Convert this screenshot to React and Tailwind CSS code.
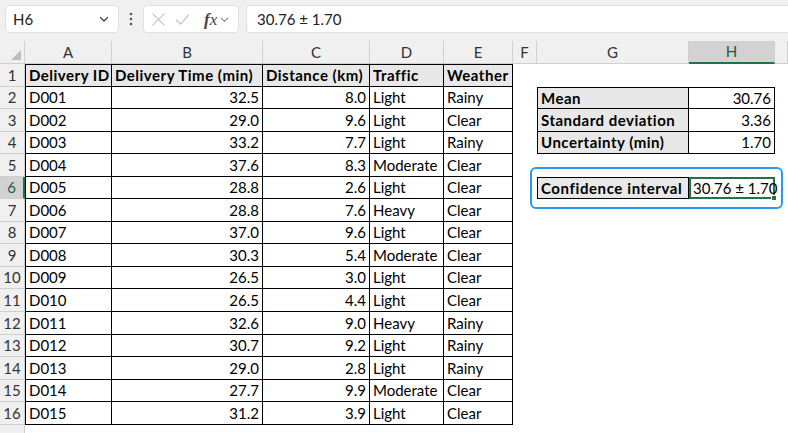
import React from "react";

const COLS = ["A", "B", "C", "D", "E", "F", "G", "H", ""];
const DATA = [
  ["D001", "32.5", "8.0", "Light", "Rainy"],
  ["D002", "29.0", "9.6", "Light", "Clear"],
  ["D003", "33.2", "7.7", "Light", "Rainy"],
  ["D004", "37.6", "8.3", "Moderate", "Clear"],
  ["D005", "28.8", "2.6", "Light", "Clear"],
  ["D006", "28.8", "7.6", "Heavy", "Clear"],
  ["D007", "37.0", "9.6", "Light", "Clear"],
  ["D008", "30.3", "5.4", "Moderate", "Clear"],
  ["D009", "26.5", "3.0", "Light", "Clear"],
  ["D010", "26.5", "4.4", "Light", "Clear"],
  ["D011", "32.6", "9.0", "Heavy", "Rainy"],
  ["D012", "30.7", "9.2", "Light", "Rainy"],
  ["D013", "29.0", "2.8", "Light", "Rainy"],
  ["D014", "27.7", "9.9", "Moderate", "Clear"],
  ["D015", "31.2", "3.9", "Light", "Clear"],
];
const HEAD = ["Delivery ID", "Delivery Time (min)", "Distance (km)", "Traffic", "Weather"];
const STATS = {
  2: ["Mean", "30.76"],
  3: ["Standard deviation", "3.36"],
  4: ["Uncertainty (min)", "1.70"],
};

function Chevron({ className }) {
  return (
    <svg className={className} viewBox="0 0 12 12" fill="none" stroke="currentColor" strokeWidth="1.3" strokeLinecap="round" strokeLinejoin="round">
      <path d="M2.5 4.5 L6 8 L9.5 4.5" />
    </svg>
  );
}

function Toolbar() {
  return (
    <div className="flex h-[41px] items-start bg-[#f0f0f0] pl-[5px] pt-[5px]">
      <div className="flex h-[28px] w-[114px] items-center justify-between rounded-[4px] border border-[#e0e0e0] bg-white pl-[7px] pr-[8px] text-[15px] text-[#222]">
        <span>H6</span>
        <Chevron className="h-[12px] w-[12px] text-[#444]" />
      </div>
      <div className="flex h-[28px] w-[24px] items-center justify-center">
        <svg viewBox="0 0 4 14" className="h-[14px] w-[4px]" fill="#555">
          <circle cx="2" cy="2" r="1.3" />
          <circle cx="2" cy="7" r="1.3" />
          <circle cx="2" cy="12" r="1.3" />
        </svg>
      </div>
      <div className="flex h-[28px] w-[96px] items-center rounded-[4px] border border-[#e0e0e0] bg-white pl-[7px]">
        <svg viewBox="0 0 16 16" className="h-[15px] w-[15px]" fill="none" stroke="#c4c4c4" strokeWidth="1.3" strokeLinecap="round">
          <path d="M2 2 L14 14 M14 2 L2 14" />
        </svg>
        <svg viewBox="0 0 16 16" className="ml-[9px] h-[15px] w-[15px]" fill="none" stroke="#c4c4c4" strokeWidth="1.3" strokeLinecap="round" strokeLinejoin="round">
          <path d="M1.5 8.5 L6 13 L14.5 3" />
        </svg>
        <span className="ml-[14px] font-['Liberation_Serif',serif] text-[17px] italic leading-none text-[#444]">
          <span className="font-bold">f</span>x
        </span>
        <Chevron className="ml-[2px] h-[11px] w-[11px] text-[#888]" />
      </div>
      <div className="ml-[7px] flex h-[28px] flex-1 items-center rounded-l-[4px] border border-r-0 border-[#e0e0e0] bg-white pl-[10px] text-[15px] text-[#222]">
        30.76 ± 1.70
      </div>
    </div>
  );
}

function Sheet() {
  const cells = [];
  cells.push(
    <div key="corner" className="relative border-b border-r border-[#cfcfcf] bg-[#f0f0f0]">
      <svg viewBox="0 0 10 10" className="absolute bottom-[3px] right-[3px] h-[10px] w-[10px]">
        <path d="M10 0 L10 10 L0 10 Z" fill="#bdbdbd" />
      </svg>
    </div>
  );
  COLS.forEach((c, i) => {
    const sel = c === "H";
    cells.push(
      <div
        key={"ch" + i}
        className={
          sel
            ? "flex items-center justify-center border-b-2 border-r border-b-[#217346] border-r-[#cfcfcf] bg-[#d2d2d2] text-[15px] text-[#1e5e3c]"
            : "flex items-center justify-center border-b border-r border-[#cfcfcf] bg-[#f0f0f0] text-[15px] text-[#333]"
        }
      >
        {c}
      </div>
    );
  });

  for (let r = 1; r <= 17; r++) {
    const selRow = r === 6;
    cells.push(
      <div
        key={"rh" + r}
        className={
          selRow
            ? "flex items-center justify-center border-b border-r-2 border-b-[#cfcfcf] border-r-[#217346] bg-[#d2d2d2] text-[15px] text-[#1e5e3c]"
            : "flex items-center justify-center border-b border-r border-[#cfcfcf] bg-[#f0f0f0] text-[15px] text-[#333]"
        }
      >
        {r <= 16 ? r : ""}
      </div>
    );
    for (let c = 0; c < 9; c++) {
      const key = "c" + r + "-" + c;
      if (r === 1 && c < 5) {
        cells.push(
          <div
            key={key}
            className={
              c === 0
                ? "flex items-center overflow-hidden whitespace-nowrap border border-black bg-[#e8e8e8] pl-[3px] font-bold tracking-[0.5px]"
                : "flex items-center overflow-hidden whitespace-nowrap border-b border-r border-t border-black bg-[#e8e8e8] pl-[3px] font-bold tracking-[0.5px]"
            }
          >
            {HEAD[c]}
          </div>
        );
      } else if (r >= 2 && r <= 16 && c < 5) {
        const v = DATA[r - 2][c];
        const num = c === 1 || c === 2;
        let cls;
        if (c === 0) cls = "flex items-center whitespace-nowrap border-b border-l border-r border-black pl-[3px]";
        else if (num) cls = "flex items-center justify-end whitespace-nowrap border-b border-r border-black pr-[3px]";
        else cls = "flex items-center whitespace-nowrap border-b border-r border-black pl-[3px]";
        cells.push(
          <div key={key} className={cls}>
            {v}
          </div>
        );
      } else if (STATS[r] && c === 6) {
        cells.push(
          <div
            key={key}
            className={
              r === 2
                ? "flex items-center whitespace-nowrap border border-black bg-[#e8e8e8] pl-[3px] font-bold tracking-[0.5px]"
                : "flex items-center whitespace-nowrap border-b border-l border-r border-black bg-[#e8e8e8] pl-[3px] font-bold tracking-[0.5px]"
            }
          >
            {STATS[r][0]}
          </div>
        );
      } else if (STATS[r] && c === 7) {
        cells.push(
          <div
            key={key}
            className={
              r === 2
                ? "flex items-center justify-end whitespace-nowrap border-b border-r border-t border-black pr-[3px]"
                : "flex items-center justify-end whitespace-nowrap border-b border-r border-black pr-[3px]"
            }
          >
            {STATS[r][1]}
          </div>
        );
      } else if (r === 6 && c === 6) {
        cells.push(
          <div key={key} className="flex items-center whitespace-nowrap border border-black bg-[#e8e8e8] pl-[3px] font-bold tracking-[0.6px]">
            Confidence interval
          </div>
        );
      } else if (r === 6 && c === 7) {
        cells.push(
          <div key={key} className="relative flex items-center whitespace-nowrap border-2 border-[#217346] pl-[2px]">
            30.76 ± 1.70
            <div className="absolute bottom-[-4px] right-[-4px] h-[6px] w-[6px] border border-white bg-[#217346]" />
          </div>
        );
      } else {
        cells.push(<div key={key} />);
      }
    }
  }

  return (
    <div className="relative flex-1 overflow-hidden bg-white">
      <div className="grid grid-cols-[25px_87px_151px_107px_74px_69px_24px_152px_86px_13px] grid-rows-[23px_repeat(17,22.56px)] font-['Lato',sans-serif] text-[15px] text-black">
        {cells}
      </div>
      <div className="pointer-events-none absolute left-[530px] top-[126px] h-[42px] w-[253px] rounded-[6px] border-2 border-[#2a9af0]" />
    </div>
  );
}

export default function App() {
  return (
    <div className="flex h-[433px] w-[788px] flex-col overflow-hidden bg-white font-['Lato',sans-serif]">
      <Toolbar />
      <Sheet />
    </div>
  );
}
